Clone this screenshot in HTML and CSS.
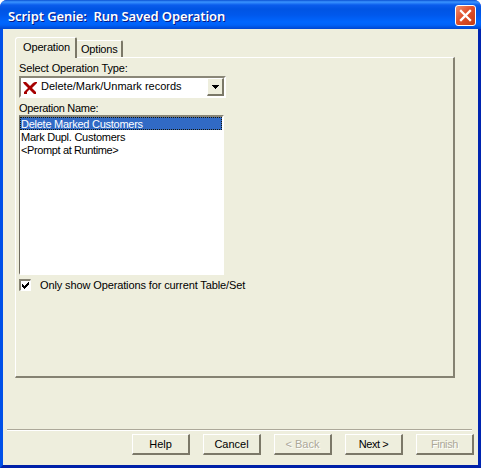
FILE: index.html
```html
<!DOCTYPE html>
<html lang="en">
<head>
<meta charset="utf-8">
<title>Script Genie: Run Saved Operation</title>
<link rel="stylesheet" href="styles.css">
</head>
<body>
<div class="window">
  <header class="titlebar">
    <span class="title">Script Genie:&nbsp; Run Saved Operation</span>
    <span class="close"><svg width="21" height="21" viewBox="0 0 21 21"><path d="M6 6l9 9M15 6l-9 9" stroke="#fff" stroke-width="2.3" stroke-linecap="square"/></svg></span>
  </header>
  <main class="body">
    <div class="tabs">
      <div class="tab active"><span class="t-op">Operation</span></div>
      <div class="tab"><span class="t-opt">Options</span></div>
    </div>
    <section class="panel">
      <div class="label l-type">Select Operation Type:</div>
      <div class="combo">
        <svg class="x-icon" width="16" height="16" viewBox="0 0 16 16" fill="#a60000"><path d="M1 2h3l4 4 3-3 2-1h2v1l-5 5 4 4v2h-2L7.500 9.500 5 12v2H2v-2l4-4-4-4z"/></svg>
        <span class="combo-text">Delete/Mark/Unmark records</span>
        <span class="drop"><svg width="7" height="4" viewBox="0 0 7 4" shape-rendering="crispEdges"><path d="M0 0h7v1H6v1H5v1H4v1H3V3H2V2H1V1H0z"/></svg></span>
      </div>
      <div class="label l-name">Operation Name:</div>
      <div class="list">
        <div class="item selected"><span class="i1">Delete Marked Customers</span></div>
        <div class="item"><span class="i2">Mark Dupl. Customers</span></div>
        <div class="item"><span class="i3">&lt;Prompt at Runtime&gt;</span></div>
      </div>
      <div class="check">
        <span class="box"><svg width="7" height="7" viewBox="0 0 7 7" shape-rendering="crispEdges"><path d="M0 2h1v1h1v1h1V3h1V2h1V1h1V0h1v3H6v1H5v1H4v1H3v1H2V6H1V5H0z"/></svg></span>
        <span class="check-text">Only show Operations for current Table/Set</span>
      </div>
    </section>
    <div class="rule"></div>
    <footer class="buttons">
      <div class="btn">Help</div>
      <div class="btn">Cancel</div>
      <div class="btn off">&lt; Back</div>
      <div class="btn tight">Next &gt;</div>
      <div class="btn off tight">Finish</div>
    </footer>
  </main>
</div>
</body>
</html>
```
FILE: styles.css
```css
* { box-sizing: border-box; }
body { margin: 0; background: #fff; font: 11px/13px "Liberation Sans", Arial, sans-serif; color: #000; }
svg { display: block; }
span { white-space: nowrap; }
.window {
  width: 481px; height: 468px; overflow: hidden;
  display: flex; flex-direction: column;
  border-radius: 7px 7px 0 0;
  background: #0831d9;
}
.titlebar {
  height: 29px; flex: none; display: flex; align-items: center; justify-content: space-between;
  padding: 2px 5px 0 8px;
  background: linear-gradient(#0a50d2 0, #3a94ff 2px, #0a5cec 5px, #0054e3 9px, #0058ec 15px, #0066ff 22px, #0062f8 25px, #0046d0 29px);
}
.title { font: 600 13px/18px "Noto Sans", "Open Sans", sans-serif; color: #fff; letter-spacing: -0.09px; text-shadow: 1px 1px 0 #0a1883; }
.close { width: 21px; height: 21px; border: 1px solid #fff; border-radius: 3px; background: linear-gradient(135deg, #f09070, #e0502c 45%, #c43c14); }
.close svg { margin: -1px; }
.body {
  flex: none; height: 439px; background: #eeeedd;
  border: solid; border-width: 0 3px 3px;
  border-color: #0040dc #0024b0 #0020a8 #0050e8;
  padding: 8px 3px 0 4px;
}
.tabs { display: flex; align-items: flex-end; height: 20px; padding-left: 8px; }
.tab {
  height: 17px; width: 46px; padding: 2px 0 0 4px;
  border: solid; border-width: 1px 2px 0 0; border-color: #fff #7b7868 #fff #fff;
  border-radius: 1px 2px 0 0;
}
.tab.active {
  height: 21px; width: 62px; margin-bottom: -1px; padding: 3px 0 0 7px;
  border-left-width: 1px; border-radius: 3px 2px 0 0;
  background: #eeeedd; position: relative;
}
.t-op { letter-spacing: -0.14px; }
.t-opt { letter-spacing: -0.2px; }
.panel {
  margin-left: 8px; width: 440px; height: 321px; padding: 4px 0 0 3px;
  border: solid; border-width: 1px 2px 2px 1px; border-color: #fff #858272 #858272 #fff;
}
.label { height: 13px; }
.l-type { letter-spacing: -0.14px; }
.combo {
  display: flex; align-items: center; margin-top: 1px; width: 207px; height: 22px;
  background: #fff; border: 2px solid; border-color: #8a8778 #fff #fff #8a8778;
}
.x-icon { margin: 1px 3px 0 1px; }
.combo-text { margin-top: -1px; }
.drop {
  margin-left: auto; width: 17px; height: 18px; display: flex; align-items: center; justify-content: center;
  background: #eeeedd; border: solid; border-width: 1px 2px 2px 1px; border-color: #fff #7b7868 #7b7868 #fff;
}
.l-name { margin-top: 4px; letter-spacing: -0.3px; }
.list {
  width: 205px; height: 160px; background: #fff;
  border: solid; border-width: 2px 2px 2px 1px; border-color: #8a8778 #fff #fff #6e6b5e;
}
.item { height: 13px; line-height: 15px; padding-left: 1px; letter-spacing: -0.26px; }
.i3 { letter-spacing: -0.38px; }
.selected { background: #316ac5; color: #fff; outline: 1px dotted #17170a; outline-offset: -1px; }
.check { display: flex; align-items: center; margin-top: 3px; height: 14px; }
.box { width: 12px; height: 12px; padding: 2px 0 0 2px; background: #fff; border: solid; border-width: 2px 1px 1px 2px; border-color: #858272 #fff #fff #858272; }
.box svg { margin: -1px 0 0 -1px; }
.check-text { margin-left: 9px; letter-spacing: -0.12px; }
.rule { margin-top: 51px; width: 465px; height: 2px; border-top: 1px solid #aca899; border-bottom: 1px solid #fff; }
.buttons { display: flex; gap: 13px; margin-top: 3px; padding-left: 125px; }
.btn {
  flex: none; width: 58px; height: 21px; line-height: 18px; text-align: center;
  border: solid; border-width: 1px 2px 2px 1px; border-color: #fff #7b7868 #7b7868 #fff;
}
.tight { letter-spacing: -0.4px; }
.off { color: #aca899; text-shadow: 1px 1px 0 #fff; }
```
